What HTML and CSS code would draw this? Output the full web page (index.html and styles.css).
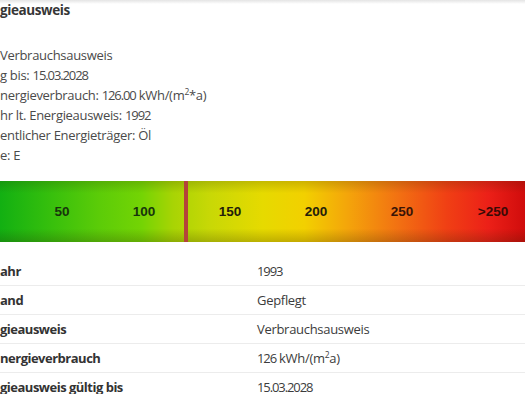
FILE: index.html
```html
<!DOCTYPE html>
<html lang="de">
<head>
<meta charset="utf-8">
<link rel="stylesheet" href="styles.css">
</head>
<body>
<div class="page">
  <div class="topshade"></div>
  <h3 class="title">gieausweis</h3>
  <ul class="facts">
    <li>Verbrauchsausweis</li>
    <li>g bis: <span class="num">15.03.2028</span></li>
    <li>nergieverbrauch: <span class="num">126.00</span> kWh/(m<sup>2</sup>*a)</li>
    <li>hr lt. Energieausweis: <span class="num">1992</span></li>
    <li>entlicher Energieträger: Öl</li>
    <li>e: E</li>
  </ul>
  <div class="scale">
    <div class="ticks">
      <span class="t50">50</span>
      <span class="t100">100</span>
      <span class="t150">150</span>
      <span class="t200">200</span>
      <span class="t250">250</span>
      <span class="tmax">&gt;250</span>
    </div>
    <div class="marker"></div>
  </div>
  <table class="details">
    <tr><th>ahr</th><td><span class="num">1993</span></td></tr>
    <tr><th>and</th><td>Gepflegt</td></tr>
    <tr><th>gieausweis</th><td>Verbrauchsausweis</td></tr>
    <tr><th>nergieverbrauch</th><td><span class="num">126</span> kWh/(m<sup>2</sup>a)</td></tr>
    <tr><th>gieausweis gültig bis</th><td><span class="num">15.03.2028</span></td></tr>
  </table>
</div>
</body>
</html>
```
FILE: styles.css
```css
html, body {
  margin: 0;
  padding: 0;
  background: #fff;
}
.page {
  position: relative;
  font-family: "Open Sans", "Noto Sans", sans-serif;
  color: #4a4a4a;
  font-size: 13px;
  letter-spacing: -0.3px;
  overflow: hidden;
  width: 525px;
  height: 394px;
}
.num { letter-spacing: -1.1px; }
.topshade {
  position: absolute;
  left: 0; top: 0; right: 0;
  height: 4px;
  background: linear-gradient(#e4e4e4, rgba(255,255,255,0));
}
.title {
  margin: 0;
  padding-top: 1px;
  font-size: 13.5px;
  font-weight: 700;
  letter-spacing: -0.4px;
  color: #363636;
  line-height: 18px;
}
.facts {
  list-style: none;
  margin: 26px 0 0 0;
  padding: 0;
  line-height: 20px;
}
.facts li { height: 20px; }
sup {
  font-size: 8.5px;
  line-height: 0;
  vertical-align: 5px;
}
.scale {
  position: relative;
  margin-top: 16px;
  height: 61px;
  letter-spacing: 0;
  background:
    linear-gradient(rgba(40,40,0,0.18), rgba(0,0,0,0) 20%, rgba(0,0,0,0) 78%, rgba(40,30,0,0.22)),
    linear-gradient(90deg, #12b012 0%, #38c00c 10%, #5ccc08 19%, #74d404 27%, #a8d404 33%, #c8d806 40%, #e6da00 50%, #f2d000 58%, #f4a60a 66%, #f27012 76%, #f04014 85%, #ec2018 93%, #d00c0c 100%);
}
.ticks {
  height: 61px;
  font-family: "Liberation Sans", Arial, sans-serif;
  font-weight: 700;
  font-size: 13.5px;
  color: #23200a;
}
.ticks span { position: absolute; top: 23px; transform: translateX(-50%); }
.t50 { left: 62px; color: #17350c; }
.t100 { left: 144px; color: #17350c; }
.t150 { left: 230px; }
.t200 { left: 316px; }
.t250 { left: 402px; color: #3a1406; }
.tmax { left: 493px; color: #3a0a06; }
.marker {
  position: absolute;
  left: 184px;
  top: 0;
  width: 4px;
  height: 61px;
  background: #b4443a;
}
.details {
  margin-top: 15px;
  width: 100%;
  border-collapse: collapse;
}
.details tr { border-bottom: 1px solid #ececec; }
.details tr:last-child { border-bottom: none; }
.details th, .details td {
  padding: 0;
  height: 28px;
  text-align: left;
  vertical-align: middle;
}
.details th {
  width: 257px;
  font-size: 13px;
  font-weight: 700;
  letter-spacing: -0.5px;
  color: #333;
}
.details td { color: #3c3c3c; }
```
